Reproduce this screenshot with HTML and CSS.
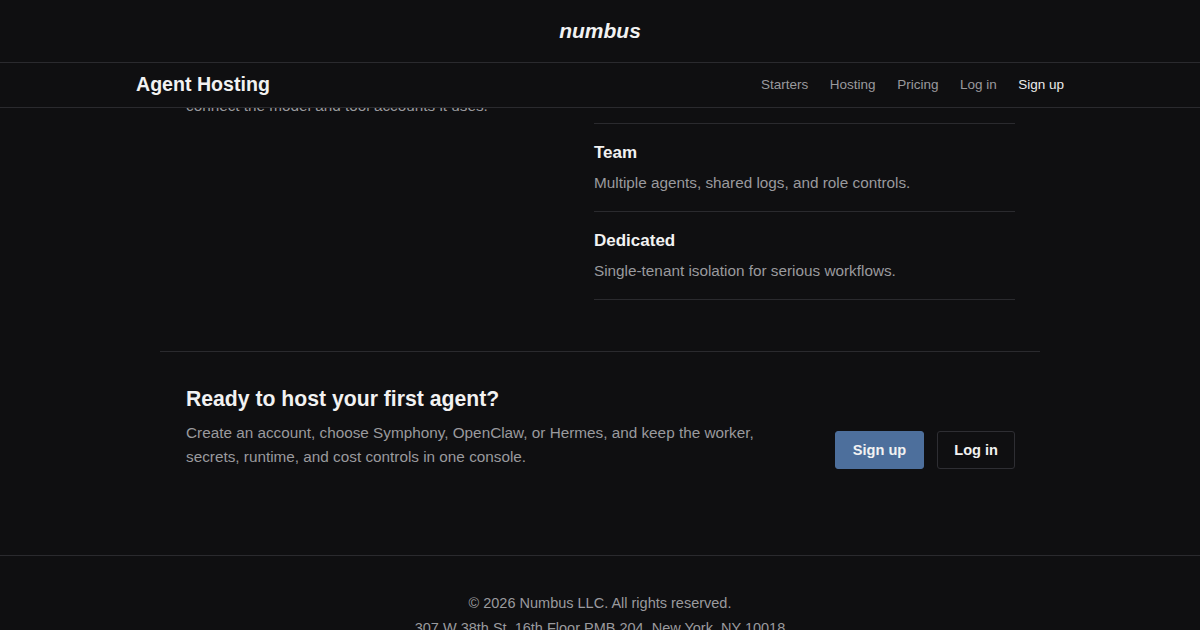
FILE: index.html
```html
<!DOCTYPE html>
<html lang="en">
<head>
    <meta charset="UTF-8">
    <meta name="viewport" content="width=device-width, initial-scale=1.0">
    <title>Agent Hosting - numbus</title>
    <link rel="stylesheet" href="styles.css">
</head>
<body>
    <header class="topo">
        <div class="marca">numbus</div>
        <nav class="barra">
            <div class="barra-dentro">
                <a class="titulo" href="#">Agent Hosting</a>
                <div class="links">
                    <a href="#">Starters</a>
                    <a href="#">Hosting</a>
                    <a href="#">Pricing</a>
                    <a href="#">Log in</a>
                    <a class="ativo" href="#">Sign up</a>
                </div>
            </div>
        </nav>
    </header>

    <main class="conteudo">
        <section class="planos">
            <div class="planos-texto">
                <p>Pick a starter, run it on a hosted worker, and<br>
                keep its secrets out of your code. Then<br>
                connect the model and tool accounts it uses.</p>
            </div>
            <ul class="lista">
                <li>
                    <h3>Solo</h3>
                    <p>One agent on a managed worker.</p>
                </li>
                <li>
                    <h3>Team</h3>
                    <p>Multiple agents, shared logs, and role controls.</p>
                </li>
                <li>
                    <h3>Dedicated</h3>
                    <p>Single-tenant isolation for serious workflows.</p>
                </li>
            </ul>
        </section>

        <section class="chamada">
            <div class="chamada-texto">
                <h2>Ready to host your first agent?</h2>
                <p>Create an account, choose Symphony, OpenClaw, or Hermes, and keep the worker, secrets, runtime, and cost controls in one console.</p>
            </div>
            <div class="botoes">
                <a class="botao principal" href="#">Sign up</a>
                <a class="botao" href="#">Log in</a>
            </div>
        </section>
    </main>

    <footer class="rodape">
        <p>&copy; 2026 Numbus LLC. All rights reserved.</p>
        <p>307 W 38th St, 16th Floor PMB 204, New York, NY 10018</p>
    </footer>
</body>
</html>
```

FILE: styles.css
```css
* {
    margin: 0;
    padding: 0;
    box-sizing: border-box;
}
body {
    background-color: #0f0f11;
    color: #ededed;
    font-family: "Liberation Sans", Arial, sans-serif;
}
a { text-decoration: none; color: inherit; }
ul { list-style: none; }

/* cabecalho fixo */
.topo {
    position: fixed;
    top: 0;
    left: 0;
    right: 0;
    background-color: #0f0f11;
    z-index: 10;
}
.marca {
    height: 63px;
    border-bottom: 1px solid #2a2a2e;
    display: flex;
    justify-content: center;
    align-items: center;
    font-size: 21px;
    font-weight: bold;
    font-style: italic;
    color: #f2f2f2;
}
.barra {
    height: 45px;
    padding-bottom: 2px;
    border-bottom: 1px solid #2a2a2e;
}
.barra-dentro {
    max-width: 928px;
    height: 100%;
    margin: 0 auto;
    display: flex;
    justify-content: space-between;
    align-items: center;
}
.titulo {
    font-size: 19.6px;
    font-weight: bold;
    color: #f2f2f2;
}
.links {
    display: flex;
    gap: 21.5px;
    font-size: 13.5px;
    color: #9a9a9e;
}
.links .ativo { color: #ececec; }

/* conteudo */
.conteudo {
    max-width: 880px;
    margin: 0 auto;
    padding-top: 35px;
}
.planos {
    display: grid;
    grid-template-columns: 1fr 421px;
    gap: 40px;
    padding: 0 25px 0 26px;
    align-items: start;
}
.planos-texto p {
    margin-top: 11px;
    font-size: 15.3px;
    line-height: 24px;
    color: #9a9a9e;
}
.lista { border-top: 1px solid #2a2a2e; }
.lista li {
    padding: 17px 0 16px;
    border-bottom: 1px solid #2a2a2e;
}
.lista h3 {
    font-size: 17px;
    line-height: 24px;
    color: #f2f2f2;
}
.lista p {
    margin-top: 6px;
    font-size: 15.3px;
    line-height: 24px;
    color: #9a9a9e;
}

.chamada {
    margin-top: 51px;
    border-top: 1px solid #2a2a2e;
    padding: 32px 25px 86px 26px;
    display: flex;
    justify-content: space-between;
    align-items: flex-end;
}
.chamada h2 {
    font-size: 21.2px;
    line-height: 30px;
    color: #f2f2f2;
}
.chamada p {
    max-width: 600px;
    margin-top: 7px;
    font-size: 15.3px;
    line-height: 24px;
    color: #9a9a9e;
}
.botoes {
    display: flex;
    gap: 13px;
}
.botao {
    height: 38px;
    padding: 0 16px;
    display: flex;
    align-items: center;
    border: 1px solid #2e2e33;
    border-radius: 3px;
    font-size: 14.6px;
    font-weight: bold;
    color: #f2f2f2;
}
.botao.principal {
    background-color: #4d6f9c;
    border-color: #4d6f9c;
    padding: 0 17px;
}

.rodape {
    border-top: 1px solid #2a2a2e;
    padding-top: 35px;
    text-align: center;
    font-size: 14.5px;
    line-height: 25px;
    color: #9a9a9e;
}
```
